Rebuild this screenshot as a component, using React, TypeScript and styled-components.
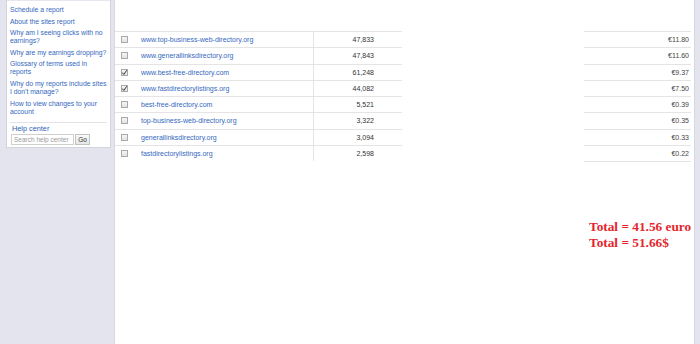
import React from "react";
import styled, { createGlobalStyle } from "styled-components";

const helpLinks = [
    "Schedule a report",
    "About the sites report",
    "Why am I seeing clicks with no earnings?",
    "Why are my earnings dropping?",
    "Glossary of terms used in reports",
    "Why do my reports include sites I don't manage?",
    "How to view changes to your account",
];

const sites = [
    { site: "www.top-business-web-directory.org", count: "47,833", earn: "€11.80", checked: false },
    { site: "www.generallinksdirectory.org", count: "47,843", earn: "€11.60", checked: false },
    { site: "www.best-free-directory.com", count: "61,248", earn: "€9.37", checked: true },
    { site: "www.fastdirectorylistings.org", count: "44,082", earn: "€7.50", checked: true },
    { site: "best-free-directory.com", count: "5,521", earn: "€0.39", checked: false },
    { site: "top-business-web-directory.org", count: "3,322", earn: "€0.35", checked: false },
    { site: "generallinksdirectory.org", count: "3,094", earn: "€0.33", checked: false },
    { site: "fastdirectorylistings.org", count: "2,598", earn: "€0.22", checked: false },
];

const App = () => {
    return (
        <>
            <GlobalStyle />
            <Page>
                <Sidebar>
                    <HelpPanel>
                        <PanelTop />
                        <LinkList>
                            {helpLinks.map((l) => (
                                <HelpLink key={l}>{l}</HelpLink>
                            ))}
                        </LinkList>
                        <Separator />
                        <HelpTitle>Help center</HelpTitle>
                        <SearchRow>
                            <SearchInput placeholder="Search help center" />
                            <GoButton>Go</GoButton>
                        </SearchRow>
                    </HelpPanel>
                </Sidebar>
                <Main>
                    <Table>
                        {sites.map((r) => (
                            <Row key={r.site}>
                                <CheckCell>
                                    <Check>
                                        {r.checked && (
                                            <svg width="7" height="7" viewBox="0 0 7 7">
                                                <path d="M1.2 3.6 L2.8 5.4 L5.8 1.2" fill="none" stroke="#333" strokeWidth="1" />
                                            </svg>
                                        )}
                                    </Check>
                                </CheckCell>
                                <SiteCell>{r.site}</SiteCell>
                                <NumCell>{r.count}</NumCell>
                                <Blank />
                                <EarnCell>{r.earn}</EarnCell>
                            </Row>
                        ))}
                        <Totals>
                            <TotalLine>Total = 41.56 euro</TotalLine>
                            <TotalLine>Total = 51.66$</TotalLine>
                        </Totals>
                    </Table>
                </Main>
                <RightStrip />
            </Page>
        </>
    );
};

export default App;

const GlobalStyle = createGlobalStyle`
    html, body {
        margin: 0;
        padding: 0;
        background: #ffffff;
    }
    body {
        font-family: "Liberation Sans", Arial, sans-serif;
    }
`;

const Page = styled.div`
    display: flex;
    width: 700px;
    height: 344px;
    overflow: hidden;
`;

const Sidebar = styled.div`
    width: 115px;
    flex-shrink: 0;
    background-color: #e3e4ed;
    border-right: 1px solid #d6d7e0;
    padding-left: 6px;
    box-sizing: border-box;
`;

const HelpPanel = styled.div`
    width: 105px;
    height: 148px;
    box-sizing: border-box;
    background-color: #ffffff;
    border: 1px solid #d3d4dc;
    border-top: none;
    padding: 0 1px 0 3px;
`;

const PanelTop = styled.div`
    height: 1px;
    background: #e6e7ee;
    margin: 0 -1px 0 -3px;
`;

const LinkList = styled.div`
    display: flex;
    flex-direction: column;
    gap: 3.6px;
    padding: 5px 0 0 0;
`;

const HelpLink = styled.a`
    font-size: 6.8px;
    line-height: 8px;
    color: #3568be;
    cursor: pointer;
`;

const Separator = styled.div`
    height: 1px;
    background: #e2e2e8;
    margin: 6px 2px 0 0;
`;

const HelpTitle = styled.div`
    font-size: 7.3px;
    line-height: 9px;
    color: #2f5fb5;
    padding: 1px 0 0 2px;
`;

const SearchRow = styled.div`
    display: flex;
    gap: 1px;
    padding: 1px 0 0 1px;
    align-items: center;
`;

const SearchInput = styled.input`
    width: 63px;
    height: 11px;
    box-sizing: border-box;
    border: 1px solid #cfcfcf;
    padding: 0 2px;
    font-family: "Liberation Sans", Arial, sans-serif;
    font-size: 6.5px;
    outline: none;
    &::placeholder {
        color: #9a9a9a;
    }
`;

const GoButton = styled.button`
    width: 15px;
    height: 11px;
    box-sizing: border-box;
    padding: 0;
    border: 1px solid #c2c2c2;
    background: linear-gradient(#fafafa, #e6e6e6);
    font-family: "Liberation Sans", Arial, sans-serif;
    font-size: 6.5px;
    color: #333;
`;

const Main = styled.div`
    flex: 1;
    background: #ffffff;
    padding-top: 31px;
`;

const Table = styled.div`
    display: grid;
    grid-template-columns: 20px 179px 88px 182px 107px;
    grid-auto-rows: 16.25px;
`;

const Row = styled.div`
    display: contents;
`;

const Cell = styled.div`
    border-top: 1px solid #e4e4e4;
    display: flex;
    align-items: center;
    font-size: 7px;
    box-sizing: border-box;
`;

const CheckCell = styled(Cell)`
    padding-left: 6px;
`;

const Check = styled.span`
    width: 7px;
    height: 7px;
    box-sizing: border-box;
    border: 1px solid #a9a9a9;
    background: linear-gradient(#f6f6f6, #e2e2e2);
    display: flex;
    align-items: center;
    justify-content: center;
    svg {
        margin: -1px;
    }
`;

const SiteCell = styled(Cell)`
    color: #3568be;
    padding-left: 6px;
    border-right: 1px solid #e4e4e4;
`;

const NumCell = styled(Cell)`
    color: #333;
    justify-content: flex-end;
    padding-right: 28px;
`;

const Blank = styled.div``;

const EarnCell = styled(Cell)`
    color: #444;
    justify-content: flex-end;
    padding-right: 2px;
`;

const Totals = styled.div`
    grid-column: 5;
    grid-row: span 3;
    border-top: 1px solid #e4e4e4;
    padding: 57px 0 0 5px;
    white-space: nowrap;
`;

const TotalLine = styled.div`
    font-family: "Liberation Serif", "Times New Roman", serif;
    font-weight: bold;
    font-size: 13.3px;
    line-height: 16px;
    color: #e3262c;
`;

const RightStrip = styled.div`
    width: 5px;
    flex-shrink: 0;
    background: #e3e4ed;
    border-left: 1px solid #d6d7e0;
`;
